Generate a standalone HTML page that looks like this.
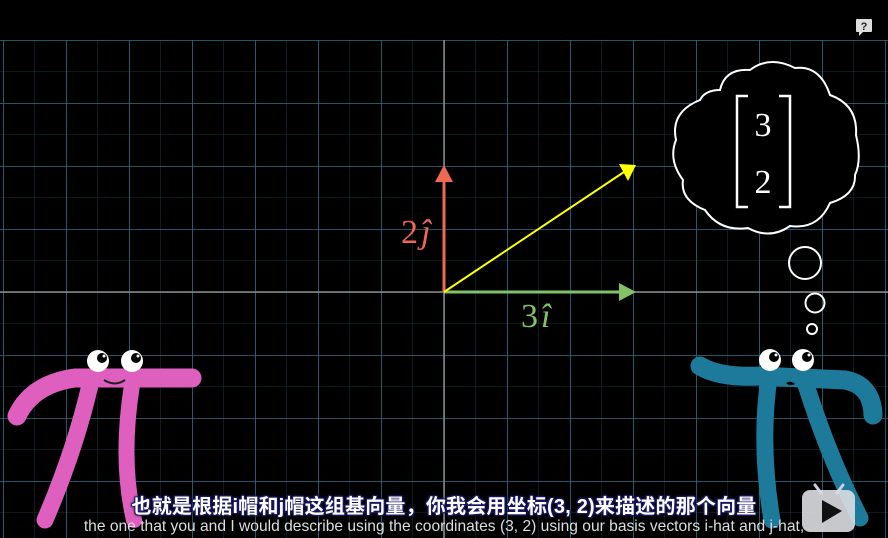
<!DOCTYPE html>
<html><head><meta charset="utf-8"><style>
html,body{margin:0;padding:0;background:#000;width:888px;height:538px;overflow:hidden}
.wrap{position:relative;width:888px;height:538px}
svg{position:absolute;left:0;top:0}
.zh{position:absolute;left:0;width:888px;top:490px;text-align:center;font:bold 20px "Liberation Sans","Noto Sans CJK SC",sans-serif;color:#fff;letter-spacing:0.2px;text-shadow:0 0 2px #1a1a6a,1px 1px 1px #1a1a6a,-1px -1px 1px #1a1a6a,1px -1px 1px #1a1a6a,-1px 1px 1px #1a1a6a,0 0 4px #223}
.en{position:absolute;left:0;width:888px;top:518px;text-align:center;font:15.6px "Liberation Sans",sans-serif;color:#ddd;white-space:nowrap}
</style></head><body><div class="wrap">
<svg width="888" height="538" viewBox="0 0 888 538">
<defs>
<pattern id="minor" x="3" y="40" width="31.5" height="31.5" patternUnits="userSpaceOnUse">
<path d="M0 0V31.5M0 0H31.5" stroke="#1a3540" stroke-width="1" fill="none"/>
</pattern>
<pattern id="major" x="3" y="40" width="63" height="63" patternUnits="userSpaceOnUse">
<path d="M0 0V63M0 0H63" stroke="#2a7088" stroke-width="1.6" fill="none"/>
</pattern>
</defs>
<rect x="0" y="40" width="888" height="498" fill="url(#minor)"/>
<rect x="0" y="40" width="888" height="498" fill="url(#major)"/>
<line x1="0" y1="292" x2="888" y2="292" stroke="#8a8a8a" stroke-width="1.5"/>
<line x1="444" y1="40" x2="444" y2="538" stroke="#8a8a8a" stroke-width="1.5"/>
<rect x="856" y="19" width="16" height="13" rx="1" fill="#ddd"/><path d="M859 32l0 4 4-4z" fill="#ddd"/>
<text x="864" y="30" font-family="Liberation Sans" font-weight="bold" font-size="11" text-anchor="middle" fill="#222">?</text>
<line x1="444" y1="292" x2="622" y2="292" stroke="#83c167" stroke-width="3"/>
<path d="M619 283L636 292L619 301Z" fill="#83c167"/>
<line x1="444" y1="292" x2="444" y2="180" stroke="#ee6950" stroke-width="3"/>
<path d="M435 182L444 165L453 182Z" fill="#ee6950"/>
<line x1="444" y1="292" x2="624" y2="172" stroke="#ffff00" stroke-width="2"/>
<path d="M619 164L636 165L628 181Z" fill="#ffff00"/>
<text x="401" y="243" font-family="Liberation Serif" font-size="34" fill="#ee6950">2</text>
<text x="421" y="243" font-family="Liberation Serif" font-style="italic" font-size="34" fill="#ee6950">ĵ</text>
<text x="521" y="327" font-family="Liberation Serif" font-size="34" fill="#83c167">3</text>
<text x="541" y="327" font-family="Liberation Serif" font-style="italic" font-size="34" fill="#83c167">î</text>
<path d="M720 90 Q725 68 750 70 Q770 55 795 68 Q820 65 830 95 Q858 105 856 135 Q862 160 855 175 Q856 195 830 203 Q818 230 790 226 Q770 240 748 228 Q720 232 705 210 Q680 200 683 180 Q668 160 676 140 Q670 112 700 100 Q705 90 720 90Z" fill="#000" stroke="#fff" stroke-width="2"/>
<path d="M748 96H737V207H748" fill="none" stroke="#fff" stroke-width="2.5"/>
<path d="M779 96H790V207H779" fill="none" stroke="#fff" stroke-width="2.5"/>
<text x="763" y="136" font-family="Liberation Serif" font-size="34" fill="#fff" text-anchor="middle">3</text>
<text x="763" y="193" font-family="Liberation Serif" font-size="34" fill="#fff" text-anchor="middle">2</text>
<circle cx="805" cy="263" r="16" fill="none" stroke="#fff" stroke-width="2"/>
<circle cx="815" cy="303" r="9.5" fill="none" stroke="#fff" stroke-width="2"/>
<circle cx="812" cy="329" r="5" fill="none" stroke="#fff" stroke-width="2"/>
<g fill="none" stroke="#df5fbf" stroke-linecap="round">
<path d="M17 416 Q32 384 75 378 L192 378" stroke-width="19"/>
<path d="M90 385 Q75 450 45 520" stroke-width="17"/>
<path d="M132 385 Q120 460 134 520" stroke-width="16"/>
</g>
<circle cx="98" cy="361" r="11" fill="#fff"/><circle cx="102" cy="358" r="5" fill="#000"/><circle cx="104" cy="356" r="1.5" fill="#fff"/>
<circle cx="132" cy="361" r="11" fill="#fff"/><circle cx="136" cy="358" r="5" fill="#000"/><circle cx="138" cy="356" r="1.5" fill="#fff"/>
<path d="M104 380 Q115 387 125 380" stroke="#222" stroke-width="2" fill="none"/>
<g fill="none" stroke="#1d7a9a" stroke-linecap="round">
<path d="M700 366 Q720 378 760 376 L845 380 Q872 385 873 415" stroke-width="19"/>
<path d="M768 385 Q760 450 772 520" stroke-width="17"/>
<path d="M806 385 Q830 460 860 518" stroke-width="17"/>
</g>
<circle cx="770" cy="360" r="11" fill="#fff"/><circle cx="774" cy="357" r="5" fill="#000"/><circle cx="776" cy="355" r="1.5" fill="#fff"/>
<circle cx="803" cy="360" r="11" fill="#fff"/><circle cx="807" cy="357" r="5" fill="#000"/><circle cx="809" cy="355" r="1.5" fill="#fff"/>
<path d="M786 383 Q791 380 795 384 Q790 387 786 383Z" fill="#000"/>
<path d="M815 485L821 493M843 485L837 493" stroke="#ccd" stroke-width="3" stroke-linecap="round"/>
<rect x="802" y="490" width="53" height="42" rx="8" fill="#dcdee2" opacity="0.9"/>
<path d="M822 500L842 511L822 523Z" fill="#111"/>
</svg>
<div class="zh">也就是根据i帽和j帽这组基向量，你我会用坐标(3, 2)来描述的那个向量</div>
<div class="en">the one that you and I would describe using the coordinates (3, 2) using our basis vectors i-hat and j-hat,</div>
</div></body></html>
